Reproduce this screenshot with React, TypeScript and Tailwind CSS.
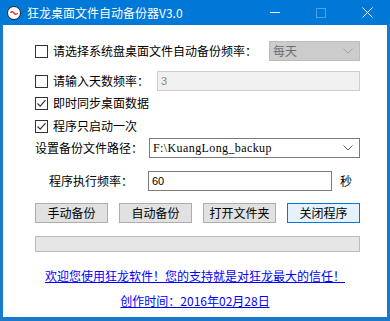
import React, { useState } from 'react';

const font = { fontFamily: '"Noto Sans CJK SC", "Noto Sans", sans-serif' };

const CheckBox: React.FC<{ checked: boolean; onToggle: () => void }> = ({ checked, onToggle }) => (
  <button
    onClick={onToggle}
    className="w-[13px] h-[13px] border border-[#333333] bg-white flex items-center justify-center shrink-0"
  >
    {checked && (
      <svg width="11" height="11" viewBox="0 0 11 11">
        <polyline points="1.5,5.5 4.2,8.2 9.5,2.2" fill="none" stroke="#333333" strokeWidth="1.2" />
      </svg>
    )}
  </button>
);

const Chevron: React.FC<{ color: string }> = ({ color }) => (
  <svg width="10" height="6" viewBox="0 0 10 6">
    <polyline points="0.5,0.5 5,5 9.5,0.5" fill="none" stroke={color} strokeWidth="1" />
  </svg>
);

const App: React.FC = () => {
  const [opts, setOpts] = useState({ daily: false, days: false, sync: true, once: true });
  const toggle = (k: keyof typeof opts) => setOpts(prev => ({ ...prev, [k]: !prev[k] }));

  return (
    <div className="w-[390px] h-[321px] bg-[#1979ca] flex flex-col text-[12px] text-black" style={font}>
      {/* title bar */}
      <div className="h-[25px] bg-[#0078d7] flex items-center shrink-0">
        <div className="ml-[7px] w-[14px] h-[14px] rounded-full bg-white border border-[#222] flex items-center justify-center">
          <svg width="8" height="6" viewBox="0 0 8 6">
            <path d="M0.5 3 Q2 0.5 4 3 T7.5 3" fill="none" stroke="#d33" strokeWidth="1.4" />
          </svg>
        </div>
        <span className="ml-[6px] text-white text-[12px] leading-none">狂龙桌面文件自动备份器V3.0</span>
        <div className="ml-auto flex items-center h-full">
          <div className="w-[46px] h-full flex items-center justify-center">
            <div className="w-[10px] h-px bg-white" />
          </div>
          <div className="w-[46px] h-full flex items-center justify-center">
            <div className="w-[10px] h-[10px] border border-[#4ca0e3]" />
          </div>
          <div className="w-[46px] h-full flex items-center justify-center">
            <svg width="11" height="11" viewBox="0 0 11 11">
              <path d="M0.5 0.5 L10.5 10.5 M10.5 0.5 L0.5 10.5" stroke="white" strokeWidth="1" />
            </svg>
          </div>
        </div>
      </div>

      {/* client area */}
      <div className="flex-1 mx-[3px] mb-[4px] bg-white flex flex-col pl-[32px] pr-[27px]">
        <div className="mt-[16px] h-[20px] flex items-center">
          <CheckBox checked={opts.daily} onToggle={() => toggle('daily')} />
          <span className="ml-[5px]">请选择系统盘桌面文件自动备份频率：</span>
          <div className="ml-auto w-[91px] h-[20px] bg-[#cccccc] border border-[#bcbcbc] flex items-center pl-[3px] pr-[6px]">
            <span className="text-[#6d6d6d]">每天</span>
            <div className="ml-auto"><Chevron color="#a5a5a5" /></div>
          </div>
        </div>

        <div className="mt-[10px] h-[20px] flex items-center">
          <CheckBox checked={opts.days} onToggle={() => toggle('days')} />
          <span className="ml-[5px]">请输入天数频率：</span>
          <div className="ml-auto w-[203px] h-[20px] bg-[#f0f0f0] border border-[#cccccc] flex items-center pl-[3px]">
            <span className="text-[#8a8a8a] text-[11px]" style={{ fontFamily: '"Liberation Sans", sans-serif' }}>3</span>
          </div>
        </div>

        <div className="mt-[2px] h-[20px] flex items-center">
          <CheckBox checked={opts.sync} onToggle={() => toggle('sync')} />
          <span className="ml-[5px]">即时同步桌面数据</span>
        </div>

        <div className="mt-[3px] h-[20px] flex items-center">
          <CheckBox checked={opts.once} onToggle={() => toggle('once')} />
          <span className="ml-[5px]">程序只启动一次</span>
        </div>

        <div className="mt-[2px] h-[20px] flex items-center">
          <span>设置备份文件路径：</span>
          <div className="ml-auto w-[211px] h-[20px] border border-[#7a7a7a] flex items-center pl-[3px] pr-[6px]">
            <span
              className="text-[12px] tracking-[0.4px]"
              style={{ fontFamily: '"Liberation Serif", serif' }}
            >
              F:\KuangLong_backup
            </span>
            <div className="ml-auto"><Chevron color="#606060" /></div>
          </div>
        </div>

        <div className="mt-[13px] h-[20px] flex items-center">
          <span className="pl-[14px]">程序执行频率：</span>
          <div className="ml-auto w-[184px] h-[20px] border border-[#7a7a7a] flex items-center pl-[3px]">
            <span className="text-[11px]" style={{ fontFamily: '"Liberation Sans", sans-serif' }}>60</span>
          </div>
          <span className="ml-[8px] mr-[8px]">秒</span>
        </div>

        <div className="mt-[12px] h-[20px] flex items-center gap-[11px]">
          <button className="w-[73px] h-[20px] bg-[#e1e1e1] border border-[#adadad]">手动备份</button>
          <button className="w-[73px] h-[20px] bg-[#e1e1e1] border border-[#adadad]">自动备份</button>
          <button className="w-[73px] h-[20px] bg-[#e1e1e1] border border-[#adadad]">打开文件夹</button>
          <button className="w-[73px] h-[20px] bg-[#e5f1fb] border border-[#0078d7] ml-auto">关闭程序</button>
        </div>

        <div className="mt-[13px] h-[16px] bg-[#e6e6e6] border border-[#bcbcbc]" />

        <div className="mt-[16px] h-[16px] flex items-center justify-center -ml-[32px] -mr-[27px]">
          <a href="#" className="text-[#0000ff] underline">欢迎您使用狂龙软件！您的支持就是对狂龙最大的信任！</a>
        </div>
        <div className="mt-[9px] h-[16px] flex items-center justify-center -ml-[32px] -mr-[27px]">
          <a href="#" className="text-[#0000ff] underline">创作时间：2016年02月28日</a>
        </div>
      </div>
    </div>
  );
};

export default App;
